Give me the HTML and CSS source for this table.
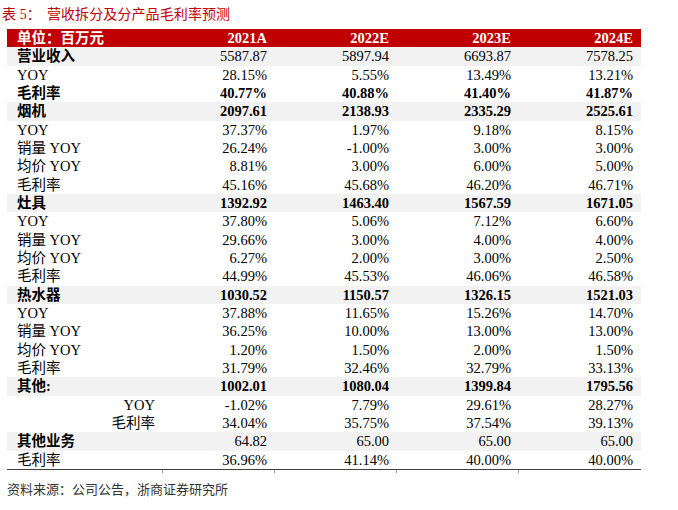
FILE: index.html
```html
<!DOCTYPE html>
<html lang="zh">
<head>
<meta charset="utf-8">
<link rel="stylesheet" href="styles.css">
</head>
<body>
<div class="title"><span class="pre">表 5：</span>营收拆分及分产品毛利率预测</div>
<div class="table">
  <div class="row head"><div class="c l">单位：百万元</div><div class="c">2021A</div><div class="c">2022E</div><div class="c">2023E</div><div class="c">2024E</div></div>
  <div class="row g"><div class="c l b">营业收入</div><div class="c">5587.87</div><div class="c">5897.94</div><div class="c">6693.87</div><div class="c">7578.25</div></div>
  <div class="row"><div class="c l">YOY</div><div class="c">28.15%</div><div class="c">5.55%</div><div class="c">13.49%</div><div class="c">13.21%</div></div>
  <div class="row bb"><div class="c l">毛利率</div><div class="c">40.77%</div><div class="c">40.88%</div><div class="c">41.40%</div><div class="c">41.87%</div></div>
  <div class="row g bb"><div class="c l">烟机</div><div class="c">2097.61</div><div class="c">2138.93</div><div class="c">2335.29</div><div class="c">2525.61</div></div>
  <div class="row"><div class="c l">YOY</div><div class="c">37.37%</div><div class="c">1.97%</div><div class="c">9.18%</div><div class="c">8.15%</div></div>
  <div class="row"><div class="c l">销量 YOY</div><div class="c">26.24%</div><div class="c">-1.00%</div><div class="c">3.00%</div><div class="c">3.00%</div></div>
  <div class="row"><div class="c l">均价 YOY</div><div class="c">8.81%</div><div class="c">3.00%</div><div class="c">6.00%</div><div class="c">5.00%</div></div>
  <div class="row"><div class="c l">毛利率</div><div class="c">45.16%</div><div class="c">45.68%</div><div class="c">46.20%</div><div class="c">46.71%</div></div>
  <div class="row g bb"><div class="c l">灶具</div><div class="c">1392.92</div><div class="c">1463.40</div><div class="c">1567.59</div><div class="c">1671.05</div></div>
  <div class="row"><div class="c l">YOY</div><div class="c">37.80%</div><div class="c">5.06%</div><div class="c">7.12%</div><div class="c">6.60%</div></div>
  <div class="row"><div class="c l">销量 YOY</div><div class="c">29.66%</div><div class="c">3.00%</div><div class="c">4.00%</div><div class="c">4.00%</div></div>
  <div class="row"><div class="c l">均价 YOY</div><div class="c">6.27%</div><div class="c">2.00%</div><div class="c">3.00%</div><div class="c">2.50%</div></div>
  <div class="row"><div class="c l">毛利率</div><div class="c">44.99%</div><div class="c">45.53%</div><div class="c">46.06%</div><div class="c">46.58%</div></div>
  <div class="row g bb"><div class="c l">热水器</div><div class="c">1030.52</div><div class="c">1150.57</div><div class="c">1326.15</div><div class="c">1521.03</div></div>
  <div class="row"><div class="c l">YOY</div><div class="c">37.88%</div><div class="c">11.65%</div><div class="c">15.26%</div><div class="c">14.70%</div></div>
  <div class="row"><div class="c l">销量 YOY</div><div class="c">36.25%</div><div class="c">10.00%</div><div class="c">13.00%</div><div class="c">13.00%</div></div>
  <div class="row"><div class="c l">均价 YOY</div><div class="c">1.20%</div><div class="c">1.50%</div><div class="c">2.00%</div><div class="c">1.50%</div></div>
  <div class="row"><div class="c l">毛利率</div><div class="c">31.79%</div><div class="c">32.46%</div><div class="c">32.79%</div><div class="c">33.13%</div></div>
  <div class="row g bb"><div class="c l">其他:</div><div class="c">1002.01</div><div class="c">1080.04</div><div class="c">1399.84</div><div class="c">1795.56</div></div>
  <div class="row"><div class="c l r">YOY</div><div class="c">-1.02%</div><div class="c">7.79%</div><div class="c">29.61%</div><div class="c">28.27%</div></div>
  <div class="row"><div class="c l r">毛利率</div><div class="c">34.04%</div><div class="c">35.75%</div><div class="c">37.54%</div><div class="c">39.13%</div></div>
  <div class="row g"><div class="c l b">其他业务</div><div class="c">64.82</div><div class="c">65.00</div><div class="c">65.00</div><div class="c">65.00</div></div>
  <div class="row last"><div class="c l">毛利率</div><div class="c">36.96%</div><div class="c">41.14%</div><div class="c">40.00%</div><div class="c">40.00%</div></div>
  <div class="ticks"><div class="t"></div><div class="t"></div><div class="t"></div><div class="t"></div><div class="t"></div></div>
</div>
<div class="source">资料来源：公司公告，浙商证券研究所</div>
</body>
</html>
```
FILE: styles.css
```css
html, body {
  margin: 0;
  padding: 0;
  background: #ffffff;
}
body {
  width: 678px;
  height: 510px;
  font-family: "Liberation Serif", "Noto Sans CJK SC", serif;
  color: #000;
}
.title {
  height: 29px;
  line-height: 29px;
  padding-left: 2px;
  font-size: 14px;
  color: #c00000;
  font-family: "Liberation Serif", "Noto Sans CJK SC", serif;
  letter-spacing: 0.1px;
}
.pre {
  margin-right: 6px;
}
.table {
  margin-left: 7px;
  width: 634px;
}
.row {
  display: flex;
  height: 18.33px;
  font-size: 14.5px;
  line-height: 19px;
}
.c {
  width: 122px;
  text-align: right;
  padding-right: 8px;
  box-sizing: border-box;
  white-space: nowrap;
}
.c:nth-child(2) {
  width: 112px;
}
.c.l {
  width: 156px;
  text-align: left;
  padding-left: 10px;
  padding-right: 0;
}
.c.l.r {
  text-align: right;
  padding-right: 8px;
}
.head {
  background: #c00000;
  color: #fff;
  font-weight: bold;
}
.g {
  background: #f2f2f2;
}
.bb .c, .b {
  font-weight: bold;
}
.last {
  border-bottom: 1.5px solid #404040;
}
.ticks {
  display: flex;
  height: 3px;
}
.t {
  width: 122px;
  border-right: 1px solid #9a9a9a;
  box-sizing: border-box;
}
.t:nth-child(1) { width: 156px; }
.t:nth-child(2) { width: 112px; }
.t:last-child { border-right: none; }
.source {
  margin-top: 6px;
  padding-left: 7px;
  font-size: 13px;
  color: #333;
  font-family: "Liberation Serif", "Noto Sans CJK SC", serif;
}
```
